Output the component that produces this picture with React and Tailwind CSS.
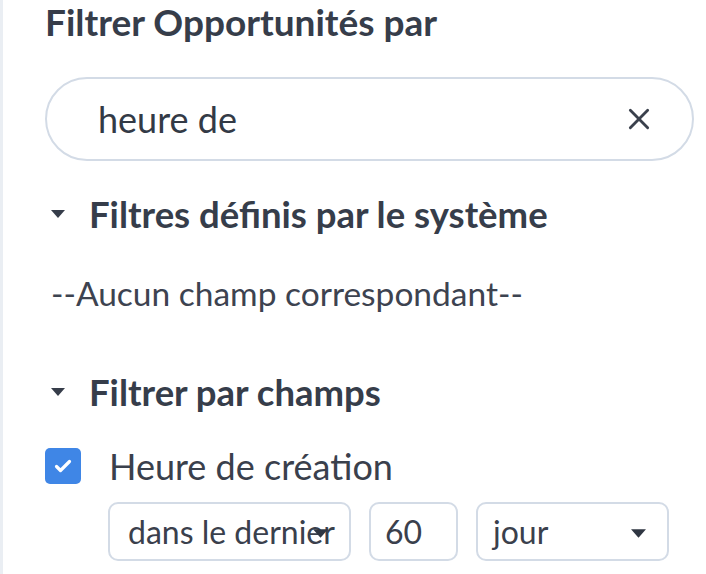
import React, { useState } from 'react';

function Caret({ className = '' }) {
  return (
    <svg viewBox="0 0 16 10" className={className} aria-hidden="true">
      <path d="M1 1h14L8 9z" fill="currentColor" />
    </svg>
  );
}

function SelectBox({ label, className = '' }) {
  return (
    <div
      className={`relative h-[59px] rounded-[10px] border-2 border-[#d3dbe6] flex items-center pl-[18px] overflow-hidden text-[32px] text-[#3a404c] ${className}`}
    >
      <span className="whitespace-nowrap">{label}</span>
      <Caret className="absolute right-[20px] top-[24px] w-[17px] h-[11px] text-[#2f3642]" />
    </div>
  );
}

export default function App() {
  const [query, setQuery] = useState('heure de');
  const [checked, setChecked] = useState(true);

  return (
    <div className="w-[706px] h-[574px] overflow-hidden bg-white border-l-[3px] border-[#eaeef3] font-['Lato','Noto_Sans',sans-serif] text-[#3a404c]">
      <div className="pl-[42px] pr-[12px]">
        <h2 className="text-[37px] font-bold leading-[44px] text-[#363d4a]">
          Filtrer Opportunités par
        </h2>

        <div className="mt-[33px] h-[84px] w-[649px] rounded-full border-2 border-[#d3dbe6] flex items-center pl-[51px] pr-[40px]">
          <input
            value={query}
            onChange={(e) => setQuery(e.target.value)}
            className="flex-1 bg-transparent outline-none text-[36px] text-[#333a46]"
          />
          <button onClick={() => setQuery('')} className="text-[#3a404c]">
            <svg viewBox="0 0 24 24" className="w-[26px] h-[26px]" fill="none" stroke="currentColor" strokeWidth="2.6" strokeLinecap="round">
              <path d="M4 4l16 16M20 4L4 20" />
            </svg>
          </button>
        </div>

        <div className="mt-[31px] flex items-center gap-[22px] h-[44px]">
          <Caret className="w-[18px] h-[10px] text-[#363d4a] ml-[4px]" />
          <span className="text-[36.5px] leading-[44px] font-bold text-[#363d4a]">Filtres définis par le système</span>
        </div>

        <p className="mt-[37px] ml-[6px] text-[33.5px] leading-[40px] text-[#3d4350]">
          --Aucun champ correspondant--
        </p>

        <div className="mt-[57px] flex items-center gap-[22px] h-[44px]">
          <Caret className="w-[18px] h-[10px] text-[#363d4a] ml-[4px]" />
          <span className="text-[36.5px] leading-[44px] font-bold text-[#363d4a]">Filtrer par champs</span>
        </div>

        <div className="mt-[30px] flex items-center gap-[28px] h-[44px]">
          <button
            onClick={() => setChecked(!checked)}
            className={`w-[36px] h-[36px] rounded-[5px] flex items-center justify-center ${checked ? 'bg-[#3f86e6]' : 'border-2 border-[#c3ccd8]'}`}
          >
            {checked && (
              <svg viewBox="0 0 24 24" className="w-[24px] h-[24px]" fill="none" stroke="white" strokeWidth="3.2" strokeLinecap="round" strokeLinejoin="round">
                <path d="M5.5 12.5l4 4L18.5 7.5" />
              </svg>
            )}
          </button>
          <span className="text-[36px] leading-[44px] text-[#3a404c]">Heure de création</span>
        </div>

        <div className="mt-[14px] ml-[63px] flex gap-[18px]">
          <SelectBox label="dans le dernier" className="w-[243px]" />
          <div className="h-[59px] w-[89px] rounded-[10px] border-2 border-[#d3dbe6] flex items-center pl-[14px] text-[32px] text-[#3a404c]">
            60
          </div>
          <SelectBox label="jour" className="w-[193px] !pl-[15px]" />
        </div>
      </div>
    </div>
  );
}
